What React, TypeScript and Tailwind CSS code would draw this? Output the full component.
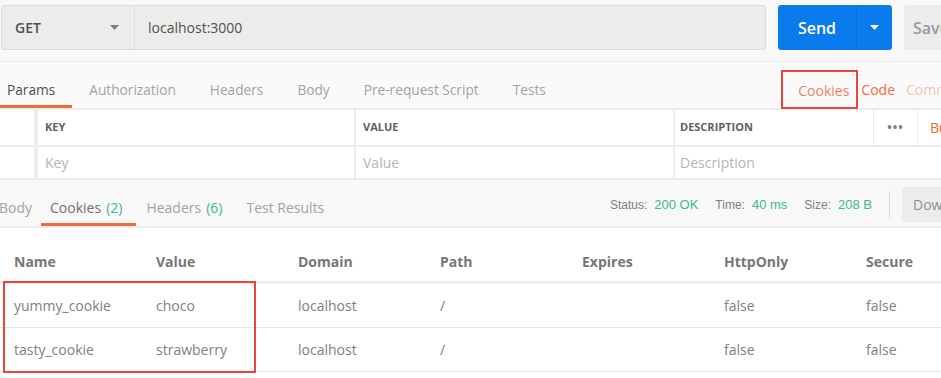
import React from "react";

const reqTabs = ["Params", "Authorization", "Headers", "Body", "Pre-request Script", "Tests"];

const cookies = [
  { name: "yummy_cookie", value: "choco" },
  { name: "tasty_cookie", value: "strawberry" },
];

const cols = ["Name", "Value", "Domain", "Path", "Expires", "HttpOnly", "Secure"];

function Caret({ className }: { className: string }) {
  return (
    <svg width="9" height="5" viewBox="0 0 9 5" className={className}>
      <path d="M0 0h9L4.5 5z" fill="currentColor" />
    </svg>
  );
}

export default function App() {
  return (
    <div className="w-[941px] h-[378px] overflow-hidden bg-white text-[14px] text-[#505050] font-['Open_Sans',sans-serif]">
      {/* url bar */}
      <div className="h-[62px] bg-[#f8f8f8] border-b border-[#ececec] pt-[5px] flex">
        <div className="shrink-0 ml-[1px] w-[765px] h-[45px] flex bg-[#ececec] border border-[#dcdcdc] rounded-[3px]">
          <div className="w-[133px] flex items-center justify-between pl-[13px] pr-[15px] border-r border-[#dcdcdc]">
            <span className="font-semibold">GET</span>
            <Caret className="text-[#808080]" />
          </div>
          <div className="flex items-center pl-[13px]">localhost:3000</div>
        </div>
        <div className="shrink-0 ml-[12px] w-[114px] h-[45px] flex bg-[#097bed] rounded-[3px] text-white">
          <div className="w-[79px] flex items-center justify-center text-[16px] font-semibold border-r border-[#0a6fd6]">Send</div>
          <div className="flex-1 flex items-center justify-center">
            <Caret className="text-white" />
          </div>
        </div>
        <div className="shrink-0 ml-[12px] w-[100px] h-[45px] flex items-center pl-[9px] bg-[#ececec] rounded-[3px] text-[16px] font-semibold text-[#9a9a9a]">
          Save
        </div>
      </div>

      {/* request tabs */}
      <div className="h-[46px] bg-[#fafafa] flex items-stretch">
        <div className="flex ml-[-10px] text-[13.7px]">
          {reqTabs.map((t, i) => (
            <div
              key={t}
              className={`px-[17px] pt-[13px] flex items-center border-b-[3px] ${
                i === 0 ? "border-[#f26b3a] text-[#505050]" : "border-transparent text-[#a3a3a3]"
              }`}
            >
              {t}
            </div>
          ))}
        </div>
        <div className="ml-auto flex items-start">
          <div className="w-[77px] h-[39px] mt-[8px] border-2 border-[#e8453c] flex items-center justify-end pr-[7px] pt-[1px] text-[#f47f5a]">
            Cookies
          </div>
          <span className="ml-[3px] mt-[17px] text-[#f26b3a]">Code</span>
          <span className="ml-[11px] mt-[17px] text-[#f8c2ae] w-[35px] overflow-hidden whitespace-nowrap">Comments</span>
        </div>
      </div>

      {/* params table */}
      <div className="border-t-2 border-[#ececec] bg-white">
        <div className="h-[37px] flex text-[11px] font-bold text-[#606060] border-b-2 border-[#ececec]">
          <div className="shrink-0 w-[34px] border-r-4 border-[#ececec] box-content" />
          <div className="shrink-0 w-[318px] flex items-center pl-[7px] border-r-2 border-[#ececec]">KEY</div>
          <div className="shrink-0 w-[319px] flex items-center pl-[7px] border-r-2 border-[#ececec]">VALUE</div>
          <div className="shrink-0 w-[199px] flex items-center pl-[5px] border-r border-[#ececec]">DESCRIPTION</div>
          <div className="shrink-0 w-[44px] flex items-center justify-center border-r border-[#ececec] text-[#808080] tracking-[1px] text-[12px]">•••</div>
          <div className="shrink-0 flex items-center pl-[12px] text-[#f26b3a] font-normal text-[14px] whitespace-nowrap">Bulk Edit</div>
        </div>
        <div className="h-[33px] flex text-[#b5b5b5] border-b-2 border-[#ececec]">
          <div className="shrink-0 w-[34px] border-r-4 border-[#ececec] box-content" />
          <div className="shrink-0 w-[318px] flex items-center pl-[7px] border-r-2 border-[#ececec]">Key</div>
          <div className="shrink-0 w-[319px] flex items-center pl-[7px] border-r-2 border-[#ececec]">Value</div>
          <div className="flex items-center pl-[5px]">Description</div>
        </div>
      </div>

      {/* response tabs */}
      <div className="h-[48px] bg-[#f8f8f8] border-b-2 border-[#efefef] flex items-stretch">
        <div className="flex ml-[-1px]">
          <div className="pr-[9px] pt-[11px] flex items-center border-b-[3px] border-transparent text-[#a3a3a3]">Body</div>
          <div className="pl-[9px] pr-[14px] pt-[11px] flex items-center border-b-[3px] border-[#f26b3a] text-[#707070]">
            Cookies <span className="ml-[5px] text-[#3db88b]">(2)</span>
          </div>
          <div className="pl-[10px] pr-[12px] pt-[11px] flex items-center border-b-[3px] border-transparent text-[#a3a3a3]">
            Headers <span className="ml-[5px] text-[#3db88b]">(6)</span>
          </div>
          <div className="pl-[12px] pt-[11px] flex items-center border-b-[3px] border-transparent text-[#a3a3a3]">Test Results</div>
        </div>
        <div className="ml-auto flex items-center font-['Liberation_Sans',sans-serif] text-[12px] pt-[3px] shrink-0">
          <span className="text-[#808080]">Status:</span>
          <span className="ml-[7px] text-[13px] text-[#3db88b]">200 OK</span>
          <span className="ml-[17px] text-[#808080]">Time:</span>
          <span className="ml-[7px] text-[13px] text-[#3db88b]">40 ms</span>
          <span className="ml-[17px] text-[#808080]">Size:</span>
          <span className="ml-[7px] text-[13px] text-[#3db88b]">208 B</span>
          <div className="ml-[17px] w-px h-[28px] bg-[#dcdcdc]" />
          <div className="ml-[12px] w-[39px] h-[35px] bg-[#ececec] rounded-l-[3px] flex items-center pl-[11px] font-['Open_Sans',sans-serif] text-[14px] text-[#909090] overflow-hidden whitespace-nowrap">
            Download
          </div>
        </div>
      </div>

      {/* cookies table */}
      <div>
        <div className="grid grid-cols-[142px_142px_142px_142px_142px_142px_89px] h-[56px] border-b-[3px] border-[#eeeeee] font-bold text-[#777777]">
          {cols.map((c) => (
            <div key={c} className="pl-[14px] pt-[23px]">{c}</div>
          ))}
        </div>
        <div className="relative">
          {cookies.map((c) => (
            <div
              key={c.name}
              className="grid grid-cols-[142px_142px_142px_142px_142px_142px_89px] h-[44px] items-center border-b border-[#e6e6e6] text-[#808080]"
            >
              <div className="pl-[14px]">{c.name}</div>
              <div className="pl-[14px]">{c.value}</div>
              <div className="pl-[14px]">localhost</div>
              <div className="pl-[14px]">/</div>
              <div />
              <div className="pl-[14px]">false</div>
              <div className="pl-[14px]">false</div>
            </div>
          ))}
          <div className="absolute left-[3px] top-[-3px] w-[253px] h-[92px] border-2 border-[#e8453c]" />
        </div>
      </div>
    </div>
  );
}
